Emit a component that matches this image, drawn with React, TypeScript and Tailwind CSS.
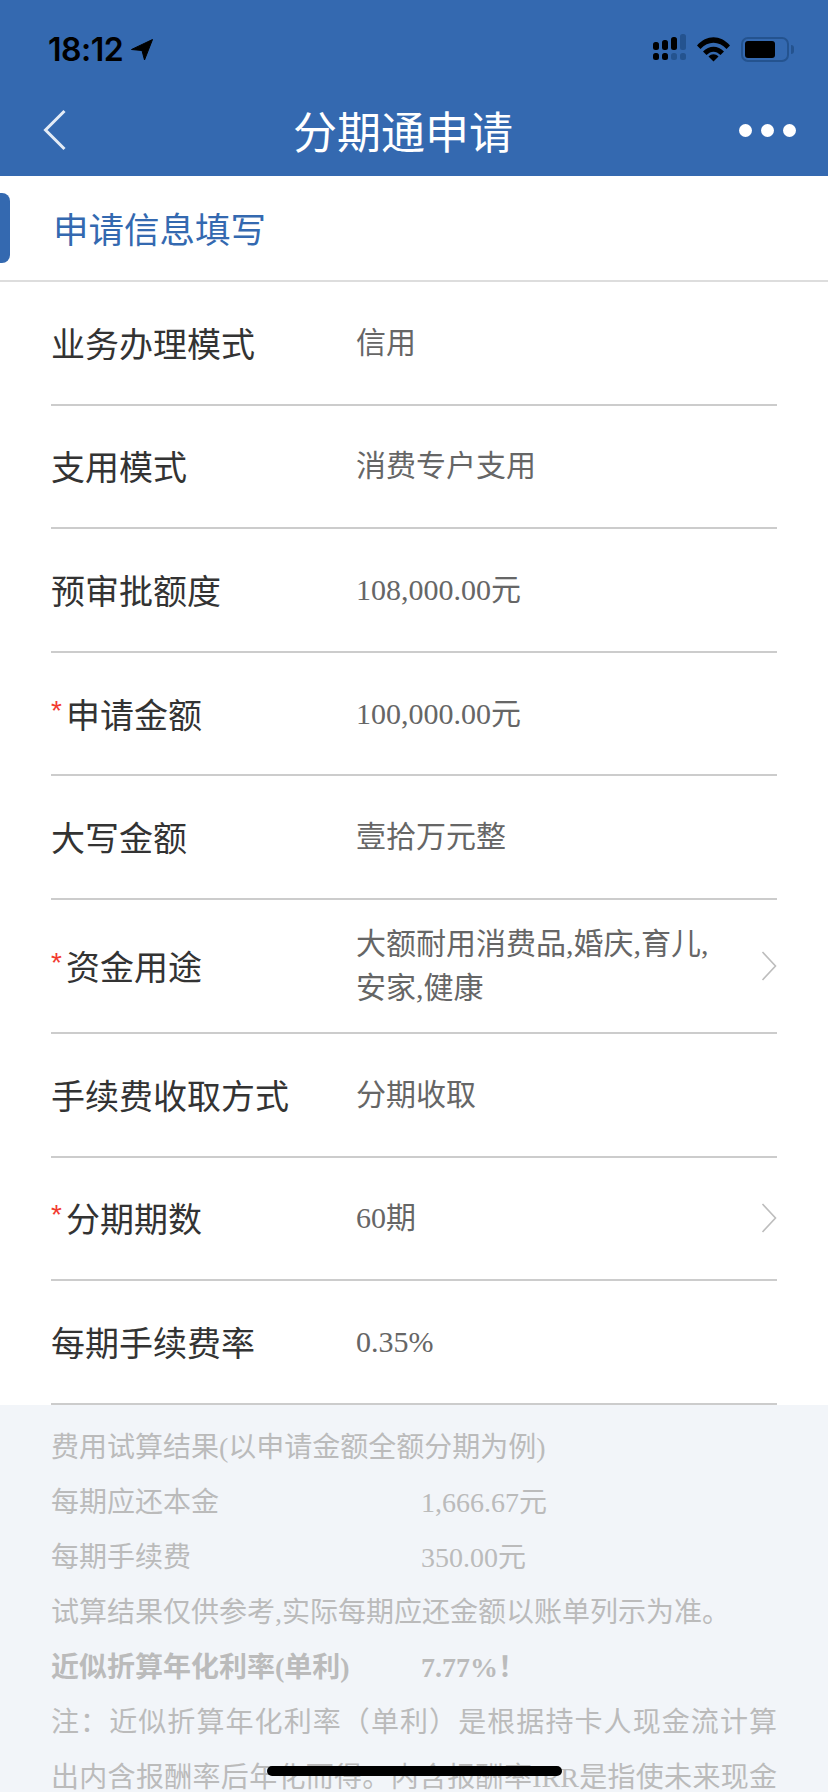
import React from "react";

const cjk = { fontFamily: '"Noto Sans CJK SC", sans-serif' };

function Chevron() {
  return (
    <svg width="16" height="30" viewBox="0 0 16 30" fill="none" className="shrink-0">
      <path d="M1.5 1 L14.5 15 L1.5 29" stroke="#bdbdbd" strokeWidth="1.6" />
    </svg>
  );
}

function Row({ label, value, req, arrow, tall }: { label: string; value: React.ReactNode; req?: boolean; arrow?: boolean; tall?: boolean }) {
  return (
    <div className={`flex items-center border-b-2 border-[#cccccc] ${tall ? "h-[134px]" : "h-[123.6px]"}`}>
      <div className="w-[305px] shrink-0 flex items-center text-[34px] leading-[44px] text-[#333333] font-['Noto_Sans_CJK_SC',sans-serif]">
        {req && <span className="text-[#f23a2f] text-[28px] w-[15px] font-['Liberation_Sans',sans-serif] -translate-y-[3px]">*</span>}
        <span>{label}</span>
      </div>
      <div className="flex-1 text-[30px] leading-[44px] text-[#666666] font-['Liberation_Serif','Noto_Sans_CJK_SC',serif]">{value}</div>
      {arrow && <Chevron />}
    </div>
  );
}

export default function App() {
  return (
    <div className="relative w-[828px] h-[1792px] overflow-hidden bg-white" style={cjk}>
      <header className="h-[176px] bg-[#3469b0] flex flex-col">
        <div className="h-[88px] pt-[32px] pl-[48px] pr-[34px] flex items-start justify-between">
          <div className="flex items-center gap-[8px] h-[36px]">
            <span className="text-[32px] leading-[36px] font-semibold text-black font-['Inter',sans-serif] tracking-[-0.5px]">18:12</span>
            <svg width="22" height="22" viewBox="0 0 22 22">
              <path d="M0.5 10.5 L21.5 0.5 L13.5 21 L11 11.5 Z" fill="#000" stroke="#000" strokeLinejoin="round" />
            </svg>
          </div>
          <div className="flex items-start gap-[11px]">
            <svg width="33" height="27" viewBox="0 0 33 27" className="mt-[2px]">
              <rect x="0" y="8" width="6" height="8" rx="2.5" fill="#000" />
              <rect x="9" y="6" width="6" height="10" rx="2.5" fill="#000" />
              <rect x="18" y="3" width="6" height="13" rx="2.5" fill="#000" />
              <rect x="27" y="0" width="6" height="16" rx="2.5" fill="#24538f" />
              <rect x="0" y="19" width="6" height="7" rx="2.5" fill="#000" />
              <rect x="9" y="19" width="6" height="7" rx="2.5" fill="#000" />
              <rect x="18" y="19" width="6" height="7" rx="2.5" fill="#24538f" />
              <rect x="27" y="19" width="6" height="7" rx="2.5" fill="#24538f" />
            </svg>
            <svg width="33" height="25" viewBox="0 0 33 25" className="mt-[5px]">
              <path d="M0 8.5 C9.5 -2.5 23.5 -2.5 33 8.5 L29.5 12 C22 3.5 11 3.5 3.5 12 Z" fill="#000" />
              <path d="M6 14.5 C12 8 21 8 27 14.5 L23.5 18 C19 13.5 14 13.5 9.5 18 Z" fill="#000" />
              <path d="M11.5 19.5 C14.5 16.5 18.5 16.5 21.5 19.5 L16.5 24.5 Z" fill="#000" />
            </svg>
            <div className="flex items-center mt-[5px]">
              <div className="w-[48px] h-[25px] rounded-[7px] border-[2px] border-[#24538f] p-[2px]">
                <div className="w-[30px] h-full rounded-[3px] bg-black" />
              </div>
              <div className="w-[3px] h-[9px] ml-[2px] rounded-r-[3px] bg-[#24538f]" />
            </div>
          </div>
        </div>
        <div className="h-[88px] pl-[43px] pr-[32px] flex items-center justify-between -mt-[0px]">
          <svg width="24" height="42" viewBox="0 0 24 42" fill="none" className="mt-[-4px]">
            <path d="M21.5 2 L2.5 21 L21.5 40" stroke="#e4ecf6" strokeWidth="3" />
          </svg>
          <span className="text-[44px] leading-[56px] text-white mt-[-4px]">分期通申请</span>
          <div className="flex gap-[9px] mt-[-4px]">
            <span className="w-[13px] h-[13px] rounded-full bg-white" />
            <span className="w-[13px] h-[13px] rounded-full bg-white" />
            <span className="w-[13px] h-[13px] rounded-full bg-white" />
          </div>
        </div>
      </header>

      <div className="relative h-[106px] border-b-2 border-[#dddddd] flex items-center pl-[53px]">
        <span className="absolute left-0 top-[17px] w-[10px] h-[70px] rounded-r-[8px] bg-[#3469b0]" />
        <span className="text-[35.5px] leading-[46px] text-[#3469b0]">申请信息填写</span>
      </div>

      <div className="mx-[51px] w-[726px]">
        <Row label="业务办理模式" value="信用" />
        <Row label="支用模式" value="消费专户支用" />
        <Row label="预审批额度" value="108,000.00元" />
        <Row label="申请金额" req value="100,000.00元" />
        <Row label="大写金额" value="壹拾万元整" />
        <Row label="资金用途" req arrow tall value={<>大额耐用消费品,婚庆,育儿,<br />安家,健康</>} />
        <Row label="手续费收取方式" value="分期收取" />
        <Row label="分期期数" req arrow value="60期" />
        <Row label="每期手续费率" value="0.35%" />
      </div>

      <div className="bg-[#f2f5f9] px-[51px] pt-[15px] text-[28px] leading-[55px] text-[#bbbbbb] font-['Liberation_Serif','Noto_Sans_CJK_SC',serif]">
        <div>费用试算结果(以申请金额全额分期为例)</div>
        <div className="flex"><span className="w-[370px]">每期应还本金</span><span>1,666.67元</span></div>
        <div className="flex"><span className="w-[370px]">每期手续费</span><span>350.00元</span></div>
        <div>试算结果仅供参考,实际每期应还金额以账单列示为准。</div>
        <div className="flex font-bold"><span className="w-[370px]">近似折算年化利率(单利)</span><span>7.77%！</span></div>
        <p className="text-justify">注：近似折算年化利率（单利）是根据持卡人现金流计算出内含报酬率后年化而得。内含报酬率IRR是指使未来现金流现值等于当前本金的折现率，仅供参考使用。</p>
      </div>

      <div className="absolute left-[267px] top-[1766px] w-[295px] h-[10px] rounded-full bg-black" />
    </div>
  );
}
